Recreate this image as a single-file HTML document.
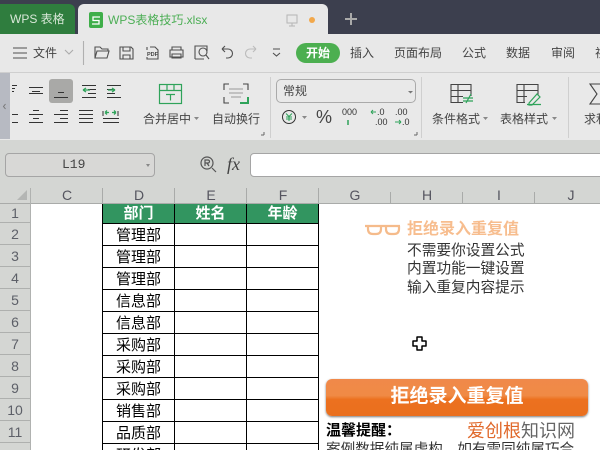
<!DOCTYPE html>
<html><head><meta charset="utf-8">
<style>
html,body{margin:0;padding:0;width:600px;height:450px;overflow:hidden;background:#fff}
body{position:relative;font-family:"Liberation Sans","Noto Sans CJK SC",sans-serif}
.a{position:absolute}
.t{position:absolute;white-space:nowrap;line-height:1}
.c{position:absolute;text-align:center;color:#55555f;font-size:14px;line-height:24px;top:183px;height:21px;width:72px;overflow:visible}
.r{position:absolute;left:0;width:30px;text-align:center;color:#5d6068;font-size:14px;line-height:23px;height:21px;border-bottom:1px solid #aeb0ae}
.d{position:absolute;left:103px;width:71px;text-align:center;color:#000;font-size:15px;line-height:23px;height:21px}
svg{position:absolute;left:0;top:0}
</style></head>
<body>
<!-- title bar -->
<div class="a" style="left:0;top:0;width:600px;height:34px;background:#3c3f4e"></div>
<div class="a" style="left:0;top:4px;width:75px;height:30px;background:#2f7d3e;border-radius:0 6px 0 0"></div>
<div class="t" style="left:10px;top:13px;font-size:12px;color:#d9e8d9">WPS 表格</div>
<div class="a" style="left:78px;top:4px;width:250px;height:30px;background:#e8e8e8;border-radius:6px 6px 0 0"></div>
<div class="a" style="left:89px;top:12px;width:14px;height:16px;background:#3fae49;border-radius:2px"></div>
<div class="t" style="left:108px;top:14px;font-size:12px;color:#4cae55">WPS表格技巧.xlsx</div>
<div class="a" style="left:309px;top:17px;width:6px;height:6px;border-radius:50%;background:#f2a84b"></div>
<!-- toolbar -->
<div class="a" style="left:0;top:34px;width:600px;height:38px;background:#e8e8e8"></div>
<div class="a" style="left:0;top:72px;width:600px;height:1px;background:#cfcfcf"></div>
<div class="t" style="left:33px;top:47px;font-size:12px;color:#444">文件</div>
<div class="a" style="left:296px;top:43px;width:44px;height:20px;border-radius:10px;background:#4caf50"></div>
<div class="t" style="left:306px;top:47px;font-size:12px;color:#fff;font-weight:bold">开始</div>
<div class="t" style="left:350px;top:47px;font-size:12px;color:#444">插入</div>
<div class="t" style="left:394px;top:47px;font-size:12px;color:#444">页面布局</div>
<div class="t" style="left:462px;top:47px;font-size:12px;color:#444">公式</div>
<div class="t" style="left:506px;top:47px;font-size:12px;color:#444">数据</div>
<div class="t" style="left:551px;top:47px;font-size:12px;color:#444">审阅</div>
<div class="t" style="left:595px;top:47px;font-size:12px;color:#444">视图</div>
<!-- ribbon -->
<div class="a" style="left:0;top:73px;width:600px;height:67px;background:#e9e9e9"></div>
<div class="a" style="left:0;top:73px;width:10px;height:66px;background:#b7bac2"></div>
<div class="a" style="left:49px;top:79px;width:24px;height:24px;background:#a9a9a7;border-radius:3px"></div>
<div class="t" style="left:143px;top:113px;font-size:12px;color:#444">合并居中</div>
<div class="t" style="left:212px;top:113px;font-size:12px;color:#444">自动换行</div>
<div class="a" style="left:276px;top:79px;width:138px;height:22px;border:1px solid #aaa;border-radius:5px;box-sizing:content-box"></div>
<div class="t" style="left:283px;top:85px;font-size:12px;color:#444">常规</div>
<div class="t" style="left:316px;top:108px;font-size:18px;color:#444">%</div>
<div class="t" style="left:342px;top:108px;font-size:9px;color:#333">000</div>
<div class="t" style="left:377px;top:108px;font-size:9px;color:#333">.0</div>
<div class="t" style="left:375px;top:118px;font-size:9px;color:#333">.00</div>
<div class="t" style="left:395px;top:108px;font-size:9px;color:#333">.00</div>
<div class="t" style="left:402px;top:118px;font-size:9px;color:#333">.0</div>
<div class="t" style="left:432px;top:113px;font-size:12px;color:#444">条件格式</div>
<div class="t" style="left:500px;top:113px;font-size:12px;color:#444">表格样式</div>
<div class="t" style="left:584px;top:113px;font-size:12px;color:#444">求和</div>
<!-- formula bar -->
<div class="a" style="left:0;top:140px;width:600px;height:64px;background:#d4d6d3"></div>
<div class="a" style="left:5px;top:153px;width:148px;height:22px;border:1px solid #a5a5a5;border-radius:4px;background:#d8d8d6"></div>
<div class="t" style="left:62px;top:158px;font-size:13px;color:#444;font-family:'Liberation Mono',monospace">L19</div>
<div class="t" style="left:227px;top:155px;font-size:18px;color:#444;font-style:italic;font-family:'Liberation Serif',serif">fx</div>
<div class="a" style="left:250px;top:153px;width:352px;height:22px;border:1px solid #a5a5a5;border-radius:4px;background:#fff"></div>
<!-- headers -->
<div class="c" style="left:31px">C</div><div class="c" style="left:103px">D</div><div class="c" style="left:175px">E</div><div class="c" style="left:247px">F</div><div class="c" style="left:319px">G</div><div class="c" style="left:391px">H</div><div class="c" style="left:463px">I</div><div class="c" style="left:535px">J</div>
<div class="a" style="left:0;top:204px;width:30px;height:246px;background:#d4d6d3"></div>
<div class="r" style="top:204px;height:18px;line-height:19px">1</div>
<div class="r" style="top:223px">2</div><div class="r" style="top:245px">3</div><div class="r" style="top:267px">4</div><div class="r" style="top:289px">5</div><div class="r" style="top:311px">6</div><div class="r" style="top:333px">7</div><div class="r" style="top:355px">8</div><div class="r" style="top:377px">9</div><div class="r" style="top:399px">10</div><div class="r" style="top:421px">11</div>
<!-- table -->
<div class="a" style="left:103px;top:204px;width:215px;height:19px;background:#329560"></div>
<div class="t" style="left:103px;width:71px;text-align:center;top:206px;font-size:15px;font-weight:bold;color:#fff">部门</div>
<div class="t" style="left:175px;width:71px;text-align:center;top:206px;font-size:15px;font-weight:bold;color:#fff">姓名</div>
<div class="t" style="left:247px;width:71px;text-align:center;top:206px;font-size:15px;font-weight:bold;color:#fff">年龄</div>
<div class="d" style="top:224px">管理部</div><div class="d" style="top:246px">管理部</div><div class="d" style="top:268px">管理部</div><div class="d" style="top:290px">信息部</div><div class="d" style="top:312px">信息部</div><div class="d" style="top:334px">采购部</div><div class="d" style="top:356px">采购部</div><div class="d" style="top:378px">采购部</div><div class="d" style="top:400px">销售部</div><div class="d" style="top:422px">品质部</div><div class="d" style="top:444px">研发部</div>
<!-- right panel -->
<div class="t" style="left:407px;top:222px;font-size:16px;font-weight:bold;color:#f7bd8e">拒绝录入重复值</div>
<div class="t" style="left:407px;top:244px;font-size:14.7px;color:#333">不需要你设置公式</div>
<div class="t" style="left:407px;top:262px;font-size:14.7px;color:#333">内置功能一键设置</div>
<div class="t" style="left:407px;top:281px;font-size:14.7px;color:#333">输入重复内容提示</div>
<div class="a" style="left:326px;top:379px;width:262px;height:37px;border-radius:6px;background:linear-gradient(#f0894a,#f08a45 45%,#ec711f 55%,#ea6f1e);box-shadow:0 1px 2px #777"></div>
<div class="t" style="left:326px;width:262px;text-align:center;top:387px;font-size:19px;font-weight:bold;color:#fff">拒绝录入重复值</div>
<div class="t" style="left:326px;top:423px;font-size:15px;font-weight:bold;color:#000">温馨提醒：</div>
<div class="t" style="left:326px;top:443px;font-size:14.6px;color:#333">案例数据纯属虚构，如有雷同纯属巧合</div>
<div class="t" style="left:467px;top:422px;font-size:18px;color:#e0682a">爱创根<span style="color:#666">知识网</span></div>
<!-- vector layer -->
<svg width="600" height="450" viewBox="0 0 600 450" fill="none">
<!-- tab icons -->
<path d="M100 17h-7v3.500h6v3.500h-7" stroke="#fff" stroke-width="1.300"/>
<g stroke="#b5b5b5" stroke-width="1"><rect x="287" y="15" width="10" height="8"/><path d="M292 23v3M289 26h6"/></g>
<path d="M345 19h12M351 13v12" stroke="#aaa" stroke-width="2"/>
<g stroke="#505050" stroke-width="1.100">
<path d="M13 48h14M13 53h14M13 58h14"/>
<path d="M65 50l4 4 4-4" stroke="#aaa"/>
<path d="M83.500 41v24" stroke="#b0b0b0"/>
<path d="M95 58v-11h5l2 2h6v2M95 58l2-7h12l-2 7z"/>
<path d="M120 47h11l2 2v10h-13zM123 47v4h7v-4M123 59v-4h7v4"/>
<path d="M150 47h5l3 3v9h-11v-2M147 50v-3"/>
<path d="M170 57v-7h13v7zM172 50v-3h9v3M172 54h9v4h-9z"/>
<path d="M195 59v-13h12v5M195 59h9"/>
<circle cx="203" cy="52" r="4"/><path d="M206 55l3 4"/>
<path d="M222 49h6a4 4 0 0 1 0 9h-2M222 49l3-3M222 49l3 3"/>
<path d="M256 49h-6a4 4 0 0 0 0 9h2M256 49l-3-3M256 49l-3 3" stroke="#bbb"/>
<path d="M273 49h7M273 53l3.500 3 3.500-3"/>
</g>
<text x="147" y="56" font-size="5.500" font-weight="bold" fill="#444" font-family="Liberation Sans,sans-serif">PDF</text>
<!-- alignment -->
<g stroke="#333" stroke-width="1">
<path d="M12 85.500h5M12 88.500h3M12 91.500h2"/>
<path d="M29 87.500h14M32 91.500h8M29 93.500h14"/>
<path d="M58 92.500h6M54 97.500h14" />
<path d="M82 85.500h14M88 89.500h8M88 93.500h8M82 97.500h14" />
<path d="M107 85.500h14M107 89.500h8M107 93.500h8M107 97.500h14" />
<path d="M12 114.500h6M12 122.500h6"/>
<path d="M29 114.500h14M33 110.500h6M33 118.500h6M29 122.500h14"/>
<path d="M54 114.500h14M60 110.500h8M60 118.500h8M54 122.500h14"/>
<path d="M79 110.500h14M79 114.500h14M79 118.500h14M79 122.500h14"/>
<path d="M103 118.500h16M103 122.500h16M103 111v5M118 111v5"/>
</g>
<g stroke="#2fa35a" stroke-width="1.300">
<path d="M83 90h7M83 90l3-2M83 90l3 2"/>
<path d="M108 90h7M115 90l-3-2M115 90l-3 2"/>
<path d="M105 112.500h4M105 112.500l2-2M105 112.500l2 2M116 112.500h-4M116 112.500l-2-2M116 112.500l-2 2"/>
</g>
<path d="M5.500 105l-2 2.500 2 2.500" stroke="#777" transform="translate(0,-1)"/>
<!-- merge -->
<g stroke="#2fa35a" stroke-width="1.200">
<rect x="159.500" y="84.500" width="22" height="19"/>
<path d="M160 90.500h21M167 85v5M174 85v5M166 94.500h9M170.500 94.500v6"/>
</g>
<path d="M194 117l2.500 3 2.500-3z" fill="#888"/>
<g stroke="#444" stroke-width="1.100">
<path d="M224 90v-6h5M243 84h5v6M224 97v6h5"/>
<path d="M229 89h14M229 93h14M231 97h10" stroke="#999"/>
</g>
<path d="M248 97v6h-8" stroke="#2fa35a" stroke-width="2"/>
<path d="M264 135h-3M264 132v3" stroke="#666"/>
<path d="M270.500 77v61" stroke="#cfcfcf"/>
<path d="M421.500 77v61M568.500 77v61" stroke="#cfcfcf"/>
<path d="M408 91l2.500 2.500 2.500-2.500z" fill="#777"/>
<!-- yuan -->
<circle cx="289" cy="117" r="6.500" stroke="#333"/>
<path d="M286 113.500l3 3 3-3M289 117v4M286 117h6M286 119h6" stroke="#2fa35a"/>
<path d="M302 116l2.500 3 2.500-3z" fill="#888"/>
<path d="M348 120v5" stroke="#2fa35a" stroke-width="1.500"/>
<path d="M371 112h5M371 112l2-2M371 112l2 2M395 122h6M401 122l-2-2M401 122l-2 2" stroke="#2fa35a"/>
<path d="M417 135h-3M417 132v3" stroke="#666"/>
<!-- cond format -->
<g stroke="#444" stroke-width="1.100">
<path d="M471 96v-11.500h-20v18h12M451 90.500h20M451 96.500h12M458 85v17"/>
<path d="M538 95v-10.500h-21v18h8M517 90.500h21M517 96.500h10M524 85v17"/>
<path d="M601 84h-11l7 10-7 10h11"/>
</g>
<g stroke="#2fa35a" stroke-width="1.200">
<path d="M463 98h10M463 101h10M471 94l-5 9"/>
<path d="M529 103l8-9 3 3-8 8h-3zM527 104.500h14"/>
</g>
<path d="M483 117l2.500 3 2.500-3zM552 117l2.500 3 2.500-3z" fill="#888"/>
<!-- name box -->
<path d="M146 164l2 3 2-3z" fill="#888"/>
<g stroke="#555" stroke-width="1.200"><circle cx="207" cy="163" r="6"/><path d="M212 168l4 4M205 166v-6h3a1.500 1.500 0 0 1 0 3h-3M207 163l2 3"/></g>
<path d="M27 190v10H17z" fill="#b4b6b4"/>
<path d="M0 203.500h600" stroke="#a9aba9"/>
<path d="M30.500 188v262" stroke="#b0b2b0"/>
<path d="M102.500 188v16M174.500 188v16M246.500 188v16M318.500 188v16M390.500 192v12M462.500 192v12M534.500 192v12" stroke="#a9aba9"/>
<!-- table lines -->
<g stroke="#000" stroke-width="1">
<path d="M102.500 204v246M174.500 204v246M246.500 204v246M318.500 204v246"/>
<path d="M102 223.500h217M102 245.500h217M102 267.500h217M102 289.500h217M102 311.500h217M102 333.500h217M102 355.500h217M102 377.500h217M102 399.500h217M102 421.500h217M102 443.500h217"/>
</g>
<!-- glasses -->
<g stroke="#f5bb8b" stroke-width="2.200">
<path d="M365 226h35"/>
<path d="M368 226v3q0 5 5 5h3q5 0 5-5v-3M386 226v3q0 5 5 5h3q5 0 5-5v-3"/>
</g>
<!-- cursor -->
<path d="M417 337h5v4h4v5h-4v4h-5v-4h-4v-5h4z" fill="#fff" stroke="#000" stroke-width="1.500" stroke-linejoin="round"/>
</svg>
</body></html>
